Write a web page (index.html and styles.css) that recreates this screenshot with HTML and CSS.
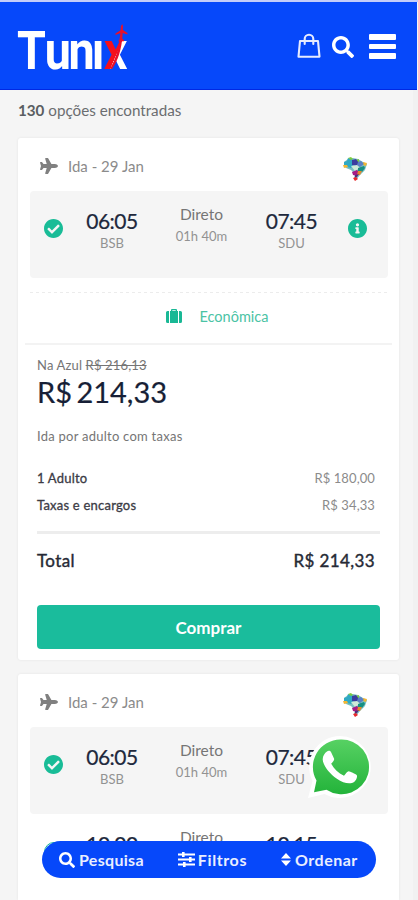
FILE: index.html
```html
<!DOCTYPE html>
<html lang="pt-BR">
<head>
<meta charset="utf-8">
<meta name="viewport" content="width=device-width">
<title>Tunix</title>
<link rel="stylesheet" href="styles.css">
</head>
<body>
<svg class="sprite" aria-hidden="true">
  <symbol id="plane" viewBox="0 0 576 512"><path d="M480 192H365.71L260.61 8.06A16.014 16.014 0 0 0 246.71 0h-65.5c-10.63 0-18.3 10.17-15.38 20.39L214.86 192H112l-43.2-57.6c-3.02-4.03-7.77-6.4-12.8-6.4H16.01C5.6 128-2.04 137.78.49 147.88L32 256 .49 364.12C-2.04 374.22 5.6 384 16.01 384H56c5.04 0 9.78-2.37 12.8-6.4L112 320h102.86l-49.03 171.6c-2.92 10.22 4.75 20.4 15.38 20.4h65.5c5.74 0 11.04-3.08 13.89-8.06L365.71 320H480c35.35 0 96-28.65 96-64s-60.65-64-96-64z"/></symbol>
  <symbol id="check" viewBox="8 8 496 496"><path d="M504 256c0 136.967-111.033 248-248 248S8 392.967 8 256 119.033 8 256 8s248 111.033 248 248zM227.314 387.314l184-184c6.248-6.248 6.248-16.379 0-22.627l-22.627-22.627c-6.248-6.249-16.379-6.249-22.628 0L216 308.118l-70.059-70.059c-6.248-6.248-16.379-6.248-22.628 0l-22.627 22.627c-6.248 6.248-6.248 16.379 0 22.627l104 104c6.249 6.249 16.379 6.249 22.628.001z"/></symbol>
  <symbol id="info" viewBox="8 8 496 496"><path d="M256 8C119.043 8 8 119.083 8 256c0 136.997 111.043 248 248 248s248-111.003 248-248C504 119.083 392.957 8 256 8zm0 110c23.196 0 42 18.804 42 42s-18.804 42-42 42-42-18.804-42-42 18.804-42 42-42zm56 254c0 6.627-5.373 12-12 12h-88c-6.627 0-12-5.373-12-12v-24c0-6.627 5.373-12 12-12h12v-64h-12c-6.627 0-12-5.373-12-12v-24c0-6.627 5.373-12 12-12h64c6.627 0 12 5.373 12 12v100h12c6.627 0 12 5.373 12 12v24z"/></symbol>
  <symbol id="search" viewBox="0 0 512 512"><path d="M505 442.7L405.3 343c-4.5-4.5-10.6-7-17-7H372c27.6-35.3 44-79.7 44-128C416 93.1 322.9 0 208 0S0 93.1 0 208s93.1 208 208 208c48.3 0 92.7-16.4 128-44v16.3c0 6.4 2.5 12.5 7 17l99.7 99.7c9.4 9.4 24.6 9.4 33.9 0l28.3-28.3c9.4-9.4 9.4-24.6.1-34zM208 336c-70.7 0-128-57.2-128-128 0-70.7 57.2-128 128-128 70.7 0 128 57.2 128 128 0 70.7-57.2 128-128 128z"/></symbol>
  <symbol id="brazil" viewBox="0 0 24 24">
    <path fill="#79bfc2" d="M1 5l4-3 5-1 5 1 5 3 4 2-2 6-5 5-4 5-2-2 1-4-4-4-5-2-2-2z"/>
    <path fill="#2fa9c4" d="M1 5l3-1 1-3 4 1 2 5-3 4-4-1-3-2z"/>
    <path fill="#7ecb3f" d="M5 1l3-1 2 2-2 1zM13 3l3-1v3l-3 1z"/>
    <path fill="#f2b632" d="M0 8l4 0 1 2-4 1zM20 5l4 1-1 3-3-1z"/>
    <path fill="#3b3d9e" d="M9 3l4-1 3 4-2 3-5-1z"/>
    <path fill="#5b7fc4" d="M15 5l3-1 3 3-4 3-3-2z"/>
    <path fill="#cfead9" d="M8 9l6-1 3 3-5 3z"/>
    <path fill="#168f82" d="M15 11l6-2 1 2-3 4-4-1z"/>
    <path fill="#a61c86" d="M9 15l5-2 3 3-3 3-4-1z"/>
    <path fill="#e68a2e" d="M15 14l4 0-2 4-3 0z"/>
    <path fill="#532a7d" d="M12 18l4-1-2 3-2 1z"/>
    <path fill="#e8292d" d="M10 21l3-1 2 2-3 2z"/>
  </symbol>
</svg>

<header class="topbar">
  <svg class="logo" width="120" height="60" viewBox="0 0 120 60" role="img">
    <defs>
      <linearGradient id="xfill" gradientUnits="userSpaceOnUse" x1="103.5" y1="26.700" x2="121.500" y2="35.300">
        <stop offset=".49" stop-color="#f5101c"/><stop offset=".51" stop-color="#fff"/>
      </linearGradient>
    </defs>
    <g transform="scale(.88 1)">
      <text class="wordmark" x="0 31.500 58.500 85 98.500" y="45">Tunı<tspan fill="url(#xfill)">x</tspan></text>
    </g>
    <path d="M93 45C98 36 101.500 26 103 12L104 2l1.200-2 .8 2-.5 10C104.500 25 101 37 95 45z" fill="#e8112b"/>
    <path d="M98.500 9.500L104 6l2 0 4.500 3v1.500l-5-1.500-2 0-5 2zM101.500 16.500l2-1.800 2 0 1.500 1.500v1l-5.500.3z" fill="#e8112b"/>
  </svg>
  <nav class="actions">
    <svg class="bag" width="24" height="26" viewBox="0 0 24 26" fill="none" stroke="#e6ebff" stroke-width="2.100" stroke-linejoin="round" stroke-linecap="round"><path d="M3 8H21L22.500 23.700H1.500zM7.700 11V6a4.300 4.300 0 0 1 8.600 0V11"/></svg>
    <svg class="find" width="22" height="22"><use href="#search"/></svg>
    <span class="burger"><i></i><i></i><i></i></span>
  </nav>
</header>

<main class="results">
  <p class="count"><b>130</b> opções encontradas</p>

  <article class="card">
    <div class="leg"><svg class="plane" width="18" height="16"><use href="#plane"/></svg><span>Ida - 29 Jan</span><svg class="airline" width="24" height="24"><use href="#brazil"/></svg></div>
    <div class="flight chosen">
      <svg class="mark" width="19" height="19"><use href="#check"/></svg>
      <div class="stop"><strong>06:05</strong><small>BSB</small></div>
      <div class="via"><span>Direto</span><small>01h 40m</small></div>
      <div class="stop"><strong>07:45</strong><small>SDU</small></div>
      <svg class="mark" width="19" height="19"><use href="#info"/></svg>
    </div>
    <div class="cabin">
      <svg width="16" height="14" viewBox="0 0 16 14" fill="#19b895"><path d="M5 2V1q0-1 1-1h4q1 0 1 1v1h1v12H4V2zM6.300 1.200V2h3.400v-.8zM0 3.500Q0 2 1.500 2H3v12H1.500Q0 14 0 12.500zM13 2h1.500Q16 2 16 3.500v9q0 1.500-1.500 1.500H13z"/></svg>
      <span>Econômica</span>
    </div>
    <div class="fare">
      <p class="old">Na Azul <s>R$ 216,13</s></p>
      <p class="price">R$ 214,33</p>
      <p class="note">Ida por adulto com taxas</p>
      <div class="line"><span>1 Adulto</span><em>R$ 180,00</em></div>
      <div class="line"><span>Taxas e encargos</span><em>R$ 34,33</em></div>
      <div class="total"><span>Total</span><span>R$ 214,33</span></div>
      <button class="buy" type="button">Comprar</button>
    </div>
  </article>

  <article class="card partial">
    <div class="leg"><svg class="plane" width="18" height="16"><use href="#plane"/></svg><span>Ida - 29 Jan</span><svg class="airline" width="24" height="24"><use href="#brazil"/></svg></div>
    <div class="flight chosen">
      <svg class="mark" width="19" height="19"><use href="#check"/></svg>
      <div class="stop"><strong>06:05</strong><small>BSB</small></div>
      <div class="via"><span>Direto</span><small>01h 40m</small></div>
      <div class="stop"><strong>07:45</strong><small>SDU</small></div>
      <svg class="mark" width="19" height="19"><use href="#info"/></svg>
    </div>
    <div class="flight">
      <span class="mark radio"></span>
      <div class="stop"><strong>10:00</strong></div>
      <div class="via"><span>Direto</span></div>
      <div class="stop"><strong>10:15</strong></div>
    </div>
  </article>
</main>

<svg class="whatsapp" width="64" height="64" viewBox="0 0 64 64">
  <defs><linearGradient id="wa" x1="0" y1="0" x2="0" y2="1"><stop offset="0" stop-color="#57d163"/><stop offset="1" stop-color="#23b33a"/></linearGradient></defs>
  <path d="M33 1A31 31 0 0 0 5.500 46L1 63 17.500 59A31 31 0 1 0 33 1z" fill="#fff"/>
  <path d="M33.300 4.500A27.400 27.400 0 0 0 9.500 45.500L7 57.200 19.500 54.700A27.400 27.400 0 1 0 33.300 4.500z" fill="url(#wa)"/>
  <path d="M20 16.500c1.200-1 3.300-.8 4 .5l3 6.500c.5 1.200-.1 2.200-2.800 5.200 3 5.500 7 9.300 12.800 12 1.800-1.900 3.200-4.500 4.800-4.400 1 .1 7 3 7.800 3.600 1.200 1.200-.2 5.300-2.200 6.800-4.300 3.300-11 1.400-17.500-3C22 38.500 16 30 15.700 24.500c-.1-3.500 2-6.500 4.300-8z" fill="#fff"/>
</svg>

<nav class="toolbar">
  <span class="tool"><svg width="16" height="16"><use href="#search"/></svg>Pesquisa</span>
  <span class="tool filters"><svg width="17" height="15" viewBox="0 0 17 15"><path d="M0 1.400h17v2.200H0zM0 6.400h17v2.200H0zM0 11.400h17v2.200H0zM4 0h2.600v5H4zM11 5h2.600v5H11zM5 10h2.600v5H5z"/></svg>Filtros</span>
  <span class="tool order"><svg width="10" height="13" viewBox="0 0 10 13"><path d="M5 0L10 5.500H0zM0 7.500H10L5 13z"/></svg>Ordenar</span>
</nav>
</body>
</html>
```
FILE: styles.css
```css
* { box-sizing: border-box; }
html { background: #f5f5f5; }
body {
  margin: 0;
  height: 900px;
  overflow: hidden;
  border-top: 2px solid #c3cdf9;
  background: #f5f5f5;
  font-family: Lato, "Liberation Sans", sans-serif;
  color: #757575;
}
p { margin: 0; }
svg { flex: none; }
.sprite { display: none; }

.topbar {
  display: flex;
  align-items: flex-start;
  justify-content: space-between;
  height: 88px;
  margin-right: 1px;
  padding: 22px 21px 0 17px;
  background: #0648fa;
  border-bottom: 1px solid #0028e4;
}
.logo { overflow: visible; }
.wordmark { font: 700 53px Roboto, sans-serif; fill: #fff; }
.actions { display: flex; padding-top: 9px; color: #fff; }
.find { margin: 3px 15px 0 11px; fill: #fff; }
.burger { display: grid; gap: 4px; width: 27px; height: 25px; margin-top: 1px; }
.burger i { border-radius: 1px; background: #fff; }

.results { padding: 10px 14px 0 18px; border-right: 5px solid #f1f1f1; }
.count { height: 37.500px; font-size: 15.200px; line-height: 21px; color: #6b6d70; }
.count b { color: #5a5d61; }

.card {
  height: 522.500px;
  margin-bottom: 13.500px;
  background: #fff;
  border-radius: 3px;
  box-shadow: 0 0 3px rgba(0, 0, 0, .07);
}
.partial { height: 226px; margin-bottom: 0; border-radius: 3px 3px 0 0; }
.leg {
  display: flex;
  align-items: center;
  height: 53.500px;
  padding: 4px 32px 0 22px;
  font-size: 15px;
  color: #8b8b8b;
}
.plane { margin-right: 10px; fill: #808080; }
.airline { margin: 6px 0 0 auto; }

.flight {
  display: grid;
  grid-template-columns: 47px 70px 109px 71px 1fr;
  height: 87px;
  margin: 0 11px 0 12px;
  padding-top: 16px;
  border-radius: 4px;
  text-align: center;
}
.chosen { margin-bottom: 7px; background: #f5f5f5; }
.chosen + .flight { height: 70px; margin-top: -7px; }
.mark { justify-self: center; margin-top: 12px; fill: #19bc97; }
.radio { width: 20px; height: 20px; border: 1px solid #19bc97; border-radius: 50%; }
.stop strong { display: block; font-size: 21px; font-weight: 400; letter-spacing: -.5px; line-height: 28px; color: #20283c; -webkit-text-stroke: .2px #20283c; }
.stop small, .via small { display: block; font-size: 13px; line-height: 16px; color: #929292; }
.via span { display: block; margin-top: -4px; font-size: 15.500px; line-height: 22px; }
.via small { margin-top: 3px; }

.cabin {
  display: flex;
  align-items: center;
  justify-content: center;
  gap: 18px;
  height: 60px;
  margin: 0 7px;
  padding: 4px 0 0 17px;
  border-bottom: 2px solid #f3f3f3;
  background: repeating-linear-gradient(90deg, #ececec 0 3px, #fff 3px 6px) 5px 7px / 358px 1px no-repeat;
  font-size: 14.500px;
  color: #4bc3a5;
}

.fare { padding: 11px 19px 0; }
.old { font-size: 13px; letter-spacing: .15px; line-height: 18px; }
.price { font-size: 29px; line-height: 36px; word-spacing: -3px; color: #171f36; -webkit-text-stroke: .2px #171f36; }
.note { margin-top: 17px; font-size: 13px; letter-spacing: .25px; line-height: 18px; }
.line {
  display: flex;
  justify-content: space-between;
  padding-right: 5px;
  font-size: 13px;
  letter-spacing: .1px;
  line-height: 27px;
}
.note + .line { margin-top: 20px; }
.line span { letter-spacing: .22px; color: #3b3b45; -webkit-text-stroke: .3px #3b3b45; }
.line em { font-style: normal; color: #8b8b8b; }
.total {
  display: flex;
  justify-content: space-between;
  margin-top: 12px;
  padding: 16px 5px 0 0;
  border-top: 3px solid #ededed;
  font-size: 17px;
  letter-spacing: .4px;
  line-height: 22px;
  color: #262a35;
  -webkit-text-stroke: .4px #262a35;
}
.buy {
  display: block;
  width: 100%;
  height: 44px;
  margin-top: 33px;
  border: 0;
  border-radius: 4px;
  background: #1abc9c;
  font: 700 17px Lato, sans-serif;
  color: #fff;
}

.whatsapp { position: absolute; left: 307px; top: 735px; }
.toolbar {
  position: absolute;
  left: 42px;
  top: 841px;
  display: flex;
  align-items: center;
  width: 334px;
  height: 37px;
  padding-left: 17px;
  border-radius: 19px;
  background: #0648fa;
  font-size: 16px;
  letter-spacing: .3px;
  font-weight: 700;
  color: #e9eeff;
}
.tool { display: flex; align-items: center; gap: 4px; }
.tool svg { fill: #fff; }
.filters { margin-left: 34px; gap: 3px; letter-spacing: .6px; }
.order { margin-left: 34px; letter-spacing: .5px; }
```
